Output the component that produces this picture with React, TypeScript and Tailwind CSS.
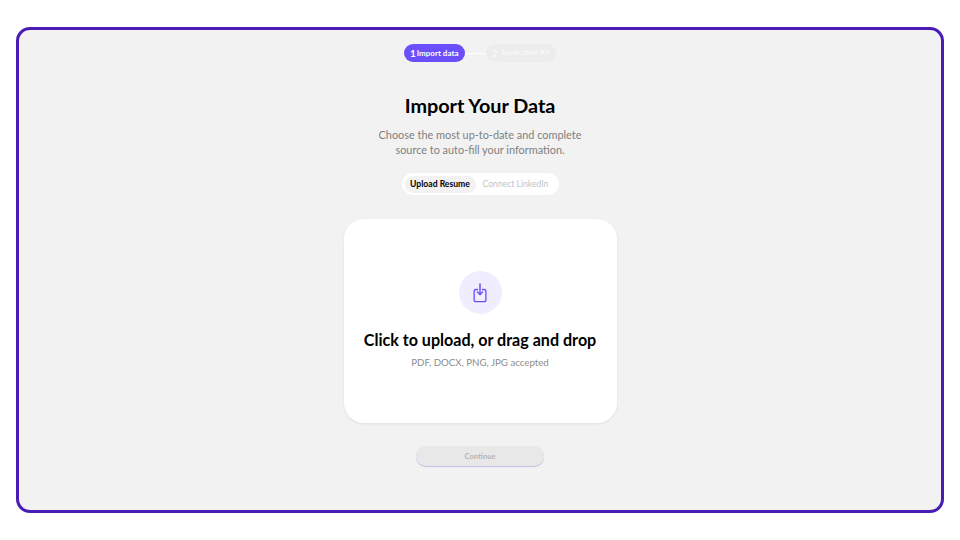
export default function App() {
  return (
    <div className="w-[960px] h-[540px] bg-white pt-[27px] pl-[16px] font-['Lato',sans-serif]">
      <div className="w-[928px] h-[486px] rounded-[14px] border-[3px] border-[#4a1cb6] bg-[#f2f2f2] flex flex-col items-center pt-[14px]">
        <div className="flex items-center h-[18px]">
          <div className="w-[61px] h-[18px] rounded-full bg-[#6a4ffb] text-white text-[8px] font-bold flex items-center pl-[6px] gap-[1px]">
            <span className="text-[10px]">1</span>
            <span>Import data</span>
          </div>
          <div className="w-[21px] h-[1px] bg-white" />
          <div className="w-[70px] h-[18px] rounded-full bg-[#ececec] text-[#f8f8f8] text-[7.4px] font-bold flex items-center pl-[6px] gap-[3px]">
            <span className="text-[10px]">2</span>
            <span>Application Kit</span>
          </div>
        </div>
        <h1 className="mt-[30px] text-[19.8px] leading-[26px] font-bold text-black">Import Your Data</h1>
        <p className="mt-[9px] text-[10.9px] leading-[15px] text-[#808080] text-center">
          Choose the most up-to-date and complete
          <br />
          source to auto-fill your information.
        </p>
        <div className="mt-[16px] w-[157px] h-[22px] rounded-full bg-white flex items-center px-[3px] text-[8.6px]">
          <div className="w-[71px] h-[17px] rounded-full bg-[#f2f2f2] text-black font-bold flex items-center justify-center">Upload Resume</div>
          <div className="flex-1 text-center text-[#c4c4c4]">Connect LinkedIn</div>
        </div>
        <div className="mt-[24px] w-[273px] h-[204px] rounded-[20px] bg-white shadow-[0_1px_3px_rgba(0,0,0,0.08)] flex flex-col items-center pt-[52px]">
          <div className="w-[43px] h-[43px] rounded-full bg-[#f0edff] flex items-center justify-center">
            <svg width="16" height="20" viewBox="0 0 16 20" fill="none" stroke="#6a4ffb" strokeWidth="1.5" strokeLinecap="round" strokeLinejoin="round">
              <path d="M8 1V11.5" />
              <path d="M5.4 9L8 11.5L10.6 9" />
              <path d="M5.2 6H3.4A2 2 0 0 0 1.4 8V16.6A2 2 0 0 0 3.4 18.6H12.6A2 2 0 0 0 14.6 16.6V8A2 2 0 0 0 12.6 6H10.8" transform="translate(0.9 0.6) scale(0.89 0.97)" />
            </svg>
          </div>
          <div className="mt-[15px] text-[16.1px] leading-[22px] font-bold text-black">Click to upload, or drag and drop</div>
          <div className="mt-[4px] text-[9.7px] leading-[14px] text-[#8c8c8c]">PDF, DOCX, PNG, JPG accepted</div>
        </div>
        <div className="mt-[23px] w-[128px] h-[20px] pt-[1px] rounded-full bg-[#e8e8e8] shadow-[0_1px_1px_#c2bbe8] text-[7.6px] font-bold text-[#b4b4b4] flex items-center justify-center">Continue</div>
      </div>
    </div>
  );
}
